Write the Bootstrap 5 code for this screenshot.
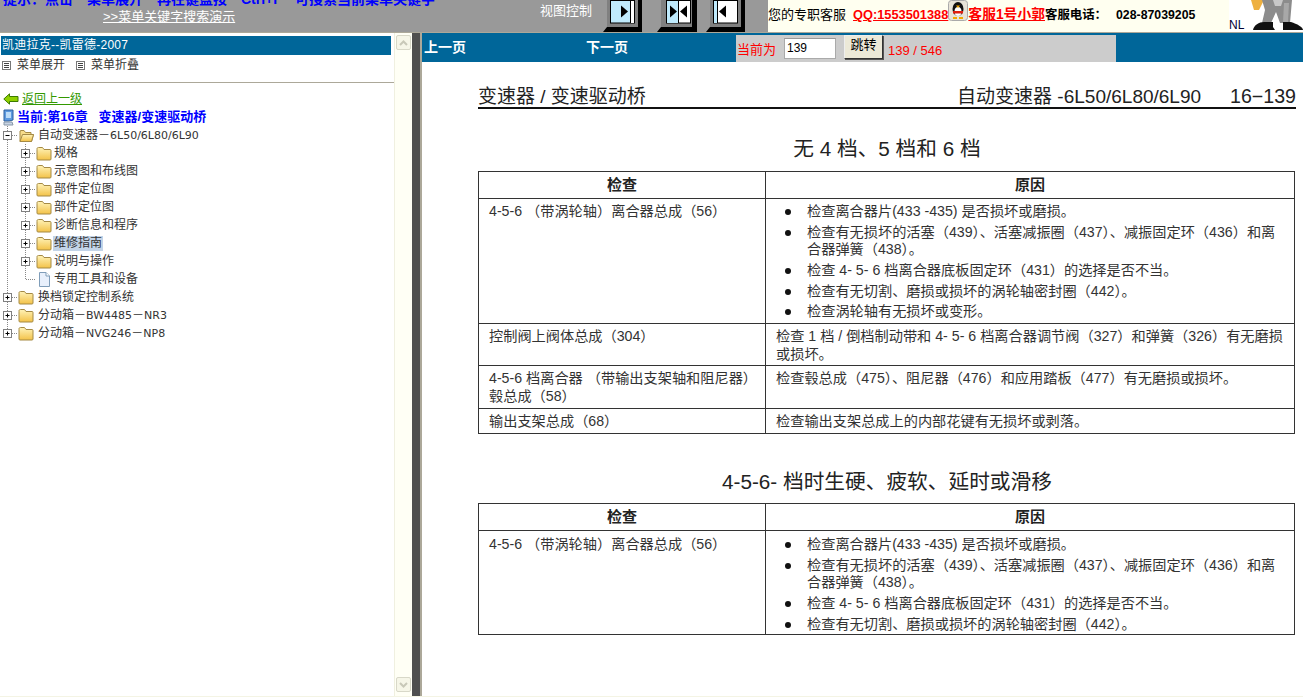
<!DOCTYPE html>
<html lang="zh-CN">
<head>
<meta charset="utf-8">
<title>维修手册</title>
<link href="https://cdn.jsdelivr.net/npm/bootstrap@5.3.0/dist/css/bootstrap.min.css" rel="stylesheet">
<style>
html,body{height:100%;overflow:hidden}
body{font-family:"Liberation Sans","Noto Sans CJK SC",sans-serif;font-size:12px;color:#333;background:#fff;line-height:1.2}
.app-shell{height:697px;width:1303px}
.top-strip{height:33px;border-bottom:1px solid #aca899;overflow:hidden}
.top-grey{width:768px;background:#999;flex:none;overflow:hidden}
.hint-block{width:537px;margin-left:3px;flex:none}
.hint-line{margin-top:-8px;height:14px;line-height:14px;font-size:14px;font-weight:700;color:#00f;white-space:nowrap}
.hint-line span{display:inline-block}
.hint-a{width:42px}.hint-b{width:42px}.hint-c{width:70px}.hint-d{width:84px}.hint-e{width:54px}
.demo-link{display:block;margin:3px 0 0 100px;width:max-content;font-size:13px;line-height:15px;color:#fff;text-decoration:underline}
.view-label{width:63px;flex:none;color:#fff;font-size:13px;line-height:21px}
.view-btn{display:block;flex:none}
.vb-gap1{margin-left:12px}.vb-gap2{margin-left:7px}
.top-cream{width:461px;flex:none;background:#fffff0;color:#000;white-space:nowrap;line-height:16px;padding-top:7px}
.top-cream a{color:#f00;font-weight:700;font-size:12.800px;text-decoration:underline}
.top-cream a.svc-name{font-size:13.800px}
.svc-a{width:85px;font-size:13px}
.penguin{width:20px;height:21px;margin-top:-7px;flex:none}
.svc-tel{font-weight:700;width:71px;flex:none;font-size:12.400px}
.svc-num{font-weight:700;font-size:12.300px}
.top-white{flex:1;background:#fff;position:relative;overflow:hidden}
.nl-mark{font-size:12px;color:#003;line-height:12px;padding-top:19px;padding-left:0}
.main-row{height:663px;background:#fffff5}
.side-pane{width:394px;flex:none;padding:3px 0 0 1px;background:#fff;height:100%;overflow:hidden}
.side-title{height:19px;width:390px;background:#069;color:#fff;line-height:19px;padding-left:1px;font-size:12px;letter-spacing:.25px}
.side-tools{height:20px;line-height:22px;color:#333;font-size:12px}
.tool-ico{width:9px;height:9px;flex:none;margin:0 6px 0 1px}
.side-tools .tool-gap{margin-left:11px}
.side-rule{height:1px;background:#aca899;margin:7px 0 0 -1px;width:394px}
.back-row{height:18px;margin-top:7px;padding-left:2px}
.back-row a{color:#390;text-decoration:underline;font-size:12px;margin-left:3px}
.cur-row{height:18px;color:#00f;font-weight:700;font-size:13px;padding-left:2px}
.cur-row svg{margin-right:3px}
.tree-row{height:18px;white-space:nowrap;font-size:12px;color:#333}
.tree-row svg{flex:none;display:block}
.tree-row .lbl{margin-left:3px;line-height:15px;padding:0 1px}
.tree-row .lbl-sub{margin-left:1px}
.tree-row .lbl i{font-style:normal;font-family:"DejaVu Sans",sans-serif;font-size:11px}
.lbl-sel{background:#c3d4e8}
.scroll-rail{width:18px;flex:none;background:#fffff5;border-left:1px solid #f0f0e0;padding:2px 2px 0 1px;height:100%}
.scroll-cap{height:15px;width:15px;background:#f6f6e8;border:1px solid #d8d8c8;border-radius:2px}
.divider-bar{width:8px;flex:none;background:#4f4f4f;border-right:0}
.doc-pane{flex:1;background:#fff;border-left:2px solid #aca899;overflow:hidden;height:100%}
.page-bar{height:29px;margin-top:0;background:#069;color:#fff;font-weight:700;font-size:14px}
.pg-prev{width:164px;padding-left:2px;flex:none}
.pg-next{width:150px;flex:none}
.jump-box{width:380px;background:#ccc;height:27px;flex:none;margin-top:1px;color:#f00;font-weight:400;font-size:13px}
.jump-box .j-label{margin-left:1px;margin-right:8px;line-height:15px;padding-top:7px}
.jump-input{width:52px;height:21px;padding:0 2px;border:1px solid #aaa;border-top-color:#999;border-radius:0;font-size:12px;color:#000;flex:none;margin-top:3px;background:#fff;min-height:0}
.jump-btn{width:39px;height:24px;padding:0 0 3px;margin:0 5px 0 8px;border:1px solid #333;border-top-color:#eee;border-left-color:#eee;border-radius:0;background:#ece9d8;font-size:13px;color:#000;line-height:18px;flex:none;box-shadow:1px 1px 0 #555}
.jump-count{font-size:13px;line-height:15px;padding-top:8px}
.doc-sheet{width:818px;margin-left:56px;color:#222}
.doc-head{margin-top:11px;border-bottom:2px solid #111;font-size:19px;line-height:21px;padding-top:13px;color:#222;box-sizing:content-box;height:21px;white-space:nowrap}
.h-code{margin-left:29px;font-size:19.600px}
.doc-title{font-size:20.700px;line-height:26px;text-align:center;margin:0;font-weight:400;color:#222}
.t-one{margin-top:27px}
.t-two{margin-top:35px}
.doc-tbl{--bs-table-border-color:#333;--bs-table-color:#333;--bs-table-bg:transparent;table-layout:fixed;width:817px;margin:9px 0 0;font-size:14.200px;line-height:17.600px}
.doc-tbl.tbl-lower{margin-top:8px}
.doc-tbl th{font-weight:700;text-align:center;font-size:15px;color:#222;height:27px;padding:0;vertical-align:middle}
.doc-tbl td{padding:4px 10px 0;vertical-align:top}
.doc-tbl.tbl-lower td{padding-top:5px}
.w-check{width:287px}
.r-125{height:125px}.r-42{height:42px}.r-43{height:43px}.r-25{height:25px}.r-104{height:104px}
.why-list{margin:0;padding:0 0 0 31px;list-style:none}
.why-list li{margin-bottom:3.100px;position:relative}
.why-list li:last-child{margin-bottom:0}
.why-list li::before{content:"";position:absolute;left:-22px;top:6px;width:6px;height:6px;border-radius:50%;background:#111}
.bottom-edge{height:1px;background:#f4f4e4}
</style>
</head>
<body>
<svg width="0" height="0" class="d-block" aria-hidden="true">
<defs>
<linearGradient id="fg" x1="0" y1="0" x2="0" y2="1"><stop offset="0" stop-color="#fff3b8"/><stop offset="1" stop-color="#f3c248"/></linearGradient>
<symbol id="folder" viewBox="0 0 16 18"><path d="M1 5.500V15a1 1 0 0 0 1 1h12a1 1 0 0 0 1-1V6.500a1 1 0 0 0-1-1H8L6.500 3.500H2.500A1.500 1.500 0 0 0 1 5.500Z" fill="url(#fg)" stroke="#a58a45"/></symbol>
<symbol id="folder-open" viewBox="0 0 16 18"><path d="M2 5V15.500H13.500L15.500 8.500H13V6.500H7.500L6 4.500H3Z" fill="#f7dc8a" stroke="#a58a45"/><path d="M2 15.500 4.500 8.500H15.500L13.500 15.500Z" fill="url(#fg)" stroke="#a58a45"/></symbol>
<symbol id="plus" viewBox="0 0 17 18"><path d="M6.500 0V18M11 9.500H17" stroke="#888" stroke-dasharray="1 1"/><rect x="2.500" y="5.500" width="8" height="8" fill="#fff" stroke="#808080"/><path d="M4.500 9.500h4M6.500 7.500v4" stroke="#000"/></symbol>
<symbol id="plus-end" viewBox="0 0 17 18"><path d="M6.500 0V9M11 9.500H17" stroke="#888" stroke-dasharray="1 1"/><rect x="2.500" y="5.500" width="8" height="8" fill="#fff" stroke="#808080"/><path d="M4.500 9.500h4M6.500 7.500v4" stroke="#000"/></symbol>
<symbol id="minus" viewBox="0 0 17 18"><path d="M6.500 0V18M11 9.500H17" stroke="#888" stroke-dasharray="1 1"/><rect x="2.500" y="5.500" width="8" height="8" fill="#fff" stroke="#808080"/><path d="M4.500 9.500h4" stroke="#000"/></symbol>
<symbol id="vline" viewBox="0 0 18 18"><path d="M6.500 0V18" stroke="#888" stroke-dasharray="1 1"/></symbol>
<symbol id="elbow" viewBox="0 0 17 18"><path d="M6.500 0V9.500H17" stroke="#888" stroke-dasharray="1 1" fill="none"/></symbol>
<symbol id="doc" viewBox="0 0 16 18"><path d="M3.500 2.500H10L13.500 6V16.500H3.500Z" fill="#e8f0fc" stroke="#7f9db9"/><path d="M10 2.500V6H13.500" fill="#fff" stroke="#7f9db9"/></symbol>
<symbol id="menu-ico" viewBox="0 0 9 9"><rect x=".5" y=".5" width="8" height="8" fill="#fff" stroke="#777"/><path d="M2 2.500h5M2 4.500h5M2 6.500h5" stroke="#444"/></symbol>
</defs>
</svg>
<div class="app-shell d-flex flex-column">
  <div class="top-strip d-flex">
    <div class="top-grey d-flex">
      <div class="hint-block">
        <div class="hint-line"><span class="hint-a">提示：</span><span class="hint-b">点击</span><span class="hint-c">菜单展开</span><span class="hint-d">再在键盘按</span><span class="hint-e">Ctrl+F</span><span>可搜索当前菜单关键字</span></div>
        <a class="demo-link" href="#">&gt;&gt;菜单关键字搜索演示</a>
      </div>
      <div class="view-label">视图控制</div>
      <svg class="view-btn" width="42" height="33" viewBox="0 0 42 33"><path d="M4 0H35V27H4Z" fill="#808080"/><path d="M35 0H39V32H0L4 27H35Z" fill="#000"/><rect x="7.500" y=".5" width="24" height="22.500" fill="#bfeafc" stroke="#000"/><rect x="28" y="1" width="3" height="22" fill="#fff"/><path d="M27.500 1V23" stroke="#000"/><path d="M18 5.500 25 11.500 18 17.500Z" fill="#000"/></svg>
      <svg class="view-btn vb-gap1" width="42" height="33" viewBox="0 0 42 33"><path d="M4 0H35V27H4Z" fill="#808080"/><path d="M35 0H40V32H0L4 27H35Z" fill="#000"/><rect x="9.500" y=".5" width="24" height="22.500" fill="#fff" stroke="#000"/><rect x="10" y="1" width="11" height="22" fill="#bfeafc"/><path d="M21.500 1V23" stroke="#000"/><path d="M13 5.500 20 11.500 13 17.500Z M30 5.500 23 11.500 30 17.500Z" fill="#000"/></svg>
      <svg class="view-btn vb-gap2" width="42" height="33" viewBox="0 0 42 33"><path d="M4 0H35V27H4Z" fill="#808080"/><path d="M35 0H39V32H0L4 27H35Z" fill="#000"/><rect x="7.500" y=".5" width="24" height="22.500" fill="#fff" stroke="#000"/><rect x="8" y="1" width="3" height="22" fill="#bfeafc"/><path d="M11.500 1V23" stroke="#000"/><path d="M20 5.500 13 11.500 20 17.500Z" fill="#000"/></svg>
    </div>
    <div class="top-cream d-flex">
      <span class="svc-a">您的专职客服</span>
      <a href="#">QQ:1553501388</a>
      <svg class="penguin" viewBox="0 0 20 21"><rect x=".5" y=".5" width="19" height="20" rx="3" fill="#e8e4d8" stroke="#aaa"/><ellipse cx="10" cy="9" rx="5.500" ry="7" fill="#111"/><ellipse cx="10" cy="11.500" rx="3.500" ry="4.500" fill="#fff"/><path d="M5 11h10v2.500H5Z" fill="#e02010"/><path d="M8 5.500h4L10 8Z" fill="#f5a800"/><path d="M5 17h4v2H5ZM11 17h4v2h-4Z" fill="#f5a800"/></svg>
      <a href="#" class="svc-name">客服1号小郭</a>
      <span class="svc-tel">客服电话：</span>
      <span class="svc-num">028-87039205</span>
    </div>
    <div class="top-white d-flex">
      <div class="nl-mark">NL</div>
      <svg class="position-absolute top-0 start-0" width="74" height="32" viewBox="0 0 74 32"><path d="M22 0H35L30 10H25Z" fill="#eeb040"/><path d="M33 0H63L61 23H51L47 12 42 23H33L36 10Z" fill="#8c8c8c"/><path d="M44 0H54L52 6H46Z" fill="#c8c8c8"/><path d="M55 3 60 3 59 22 54 22Z" fill="#a8a8a8"/><path d="M24 30C25 25 30 22 35 22H44V27L46 30Z" fill="#111"/><path d="M54 22H62C68 24 74 27 74 30H54Z" fill="#111"/></svg>
    </div>
  </div>
  <div class="main-row d-flex flex-grow-1">
    <div class="side-pane">
      <div class="side-title">凯迪拉克--凯雷德-2007</div>
      <div class="side-tools d-flex align-items-center">
        <svg class="tool-ico"><use href="#menu-ico"/></svg><span>菜单展开</span>
        <svg class="tool-ico tool-gap"><use href="#menu-ico"/></svg><span>菜单折叠</span>
      </div>
      <div class="side-rule"></div>
      <div class="back-row d-flex align-items-center">
        <svg width="16" height="12" viewBox="0 0 16 12"><path d="M6.500.8.800 6l5.700 5.200V8.500H15V3.500H6.500Z" fill="#8fd000" stroke="#3c7a00"/></svg>
        <a href="#">返回上一级</a>
      </div>
      <div class="cur-row d-flex align-items-center">
        <svg width="11" height="17" viewBox="0 0 11 17"><path d="M1 1H10V11L6 12H1Z" fill="#5d9adf" stroke="#2c5f9e"/><path d="M3 3H8V9H3Z" fill="#bcdcf8"/><path d="M1 13H9L10 16H1Z" fill="#c8d4e4" stroke="#8898a8"/></svg>
        <span>当前:第16章&nbsp;&nbsp;&nbsp;变速器/变速驱动桥</span>
      </div>
      <div class="tree-row d-flex align-items-center"><svg width="17" height="18"><use href="#minus"/></svg><svg width="16" height="18"><use href="#folder-open"/></svg><span class="lbl">自动变速器－<i>6L50/6L80/6L90</i></span></div>
      <div class="tree-row d-flex align-items-center"><svg width="18" height="18"><use href="#vline"/></svg><svg width="17" height="18"><use href="#plus"/></svg><svg width="16" height="18"><use href="#folder"/></svg><span class="lbl lbl-sub">规格</span></div>
      <div class="tree-row d-flex align-items-center"><svg width="18" height="18"><use href="#vline"/></svg><svg width="17" height="18"><use href="#plus"/></svg><svg width="16" height="18"><use href="#folder"/></svg><span class="lbl lbl-sub">示意图和布线图</span></div>
      <div class="tree-row d-flex align-items-center"><svg width="18" height="18"><use href="#vline"/></svg><svg width="17" height="18"><use href="#plus"/></svg><svg width="16" height="18"><use href="#folder"/></svg><span class="lbl lbl-sub">部件定位图</span></div>
      <div class="tree-row d-flex align-items-center"><svg width="18" height="18"><use href="#vline"/></svg><svg width="17" height="18"><use href="#plus"/></svg><svg width="16" height="18"><use href="#folder"/></svg><span class="lbl lbl-sub">部件定位图</span></div>
      <div class="tree-row d-flex align-items-center"><svg width="18" height="18"><use href="#vline"/></svg><svg width="17" height="18"><use href="#plus"/></svg><svg width="16" height="18"><use href="#folder"/></svg><span class="lbl lbl-sub">诊断信息和程序</span></div>
      <div class="tree-row d-flex align-items-center"><svg width="18" height="18"><use href="#vline"/></svg><svg width="17" height="18"><use href="#plus"/></svg><svg width="16" height="18"><use href="#folder"/></svg><span class="lbl lbl-sub lbl-sel">维修指南</span></div>
      <div class="tree-row d-flex align-items-center"><svg width="18" height="18"><use href="#vline"/></svg><svg width="17" height="18"><use href="#plus"/></svg><svg width="16" height="18"><use href="#folder"/></svg><span class="lbl lbl-sub">说明与操作</span></div>
      <div class="tree-row d-flex align-items-center"><svg width="18" height="18"><use href="#vline"/></svg><svg width="17" height="18"><use href="#elbow"/></svg><svg width="16" height="18"><use href="#doc"/></svg><span class="lbl lbl-sub">专用工具和设备</span></div>
      <div class="tree-row d-flex align-items-center"><svg width="17" height="18"><use href="#plus"/></svg><svg width="16" height="18"><use href="#folder"/></svg><span class="lbl">换档锁定控制系统</span></div>
      <div class="tree-row d-flex align-items-center"><svg width="17" height="18"><use href="#plus"/></svg><svg width="16" height="18"><use href="#folder"/></svg><span class="lbl">分动箱－<i>BW4485</i>－<i>NR3</i></span></div>
      <div class="tree-row d-flex align-items-center"><svg width="17" height="18"><use href="#plus-end"/></svg><svg width="16" height="18"><use href="#folder"/></svg><span class="lbl">分动箱－<i>NVG246</i>－<i>NP8</i></span></div>
    </div>
    <div class="scroll-rail d-flex flex-column justify-content-between">
      <div class="scroll-cap d-flex align-items-center justify-content-center"><svg width="9" height="6" viewBox="0 0 9 6"><path d="M1 5 4.500 1.500 8 5" fill="none" stroke="#c8c8b8" stroke-width="2"/></svg></div>
      <div class="scroll-cap d-flex align-items-center justify-content-center mb-1"><svg width="9" height="6" viewBox="0 0 9 6"><path d="M1 1 4.500 4.500 8 1" fill="none" stroke="#c8c8b8" stroke-width="2"/></svg></div>
    </div>
    <div class="divider-bar"></div>
    <div class="doc-pane">
      <div class="page-bar d-flex align-items-center">
        <div class="pg-prev">上一页</div>
        <div class="pg-next">下一页</div>
        <div class="jump-box d-flex align-items-start">
          <span class="j-label">当前为</span>
          <input class="form-control jump-input" value="139" aria-label="页码">
          <button class="btn jump-btn" type="button">跳转</button>
          <span class="jump-count">139 / 546</span>
        </div>
      </div>
      <div class="doc-sheet">
        <div class="doc-head d-flex justify-content-between">
          <span>变速器 / 变速驱动桥</span>
          <span>自动变速器 -6L50/6L80/6L90<span class="h-code">16−139</span></span>
        </div>
        <h2 class="doc-title t-one">无 4 档、5 档和 6 档</h2>
        <table class="table table-bordered doc-tbl">
          <colgroup><col class="w-check"><col></colgroup>
          <thead><tr><th>检查</th><th>原因</th></tr></thead>
          <tbody>
            <tr class="r-125"><td>4-5-6 （带涡轮轴）离合器总成（56）</td><td><ul class="why-list">
              <li>检查离合器片(433 -435) 是否损坏或磨损。</li>
              <li>检查有无损坏的活塞（439）、活塞减振圈（437）、减振固定环（436）和离合器弹簧（438）。</li>
              <li>检查 4- 5- 6 档离合器底板固定环（431）的选择是否不当。</li>
              <li>检查有无切割、磨损或损坏的涡轮轴密封圈（442）。</li>
              <li>检查涡轮轴有无损坏或变形。</li>
            </ul></td></tr>
            <tr class="r-42"><td>控制阀上阀体总成（304）</td><td>检查 1 档 / 倒档制动带和 4- 5- 6 档离合器调节阀（327）和弹簧（326）有无磨损或损坏。</td></tr>
            <tr class="r-43"><td>4-5-6 档离合器 （带输出支架轴和阻尼器）毂总成（58）</td><td>检查毂总成（475）、阻尼器（476）和应用踏板（477）有无磨损或损坏。</td></tr>
            <tr class="r-25"><td>输出支架总成（68）</td><td>检查输出支架总成上的内部花键有无损坏或剥落。</td></tr>
          </tbody>
        </table>
        <h2 class="doc-title t-two">4-5-6- 档时生硬、疲软、延时或滑移</h2>
        <table class="table table-bordered doc-tbl tbl-lower">
          <colgroup><col class="w-check"><col></colgroup>
          <thead><tr><th>检查</th><th>原因</th></tr></thead>
          <tbody>
            <tr class="r-104"><td>4-5-6 （带涡轮轴）离合器总成（56）</td><td><ul class="why-list">
              <li>检查离合器片(433 -435) 是否损坏或磨损。</li>
              <li>检查有无损坏的活塞（439）、活塞减振圈（437）、减振固定环（436）和离合器弹簧（438）。</li>
              <li>检查 4- 5- 6 档离合器底板固定环（431）的选择是否不当。</li>
              <li>检查有无切割、磨损或损坏的涡轮轴密封圈（442）。</li>
            </ul></td></tr>
          </tbody>
        </table>
      </div>
    </div>
  </div>
  <div class="bottom-edge"></div>
</div>
<script src="https://cdn.jsdelivr.net/npm/bootstrap@5.3.0/dist/js/bootstrap.bundle.min.js"></script>
</body>
</html>
